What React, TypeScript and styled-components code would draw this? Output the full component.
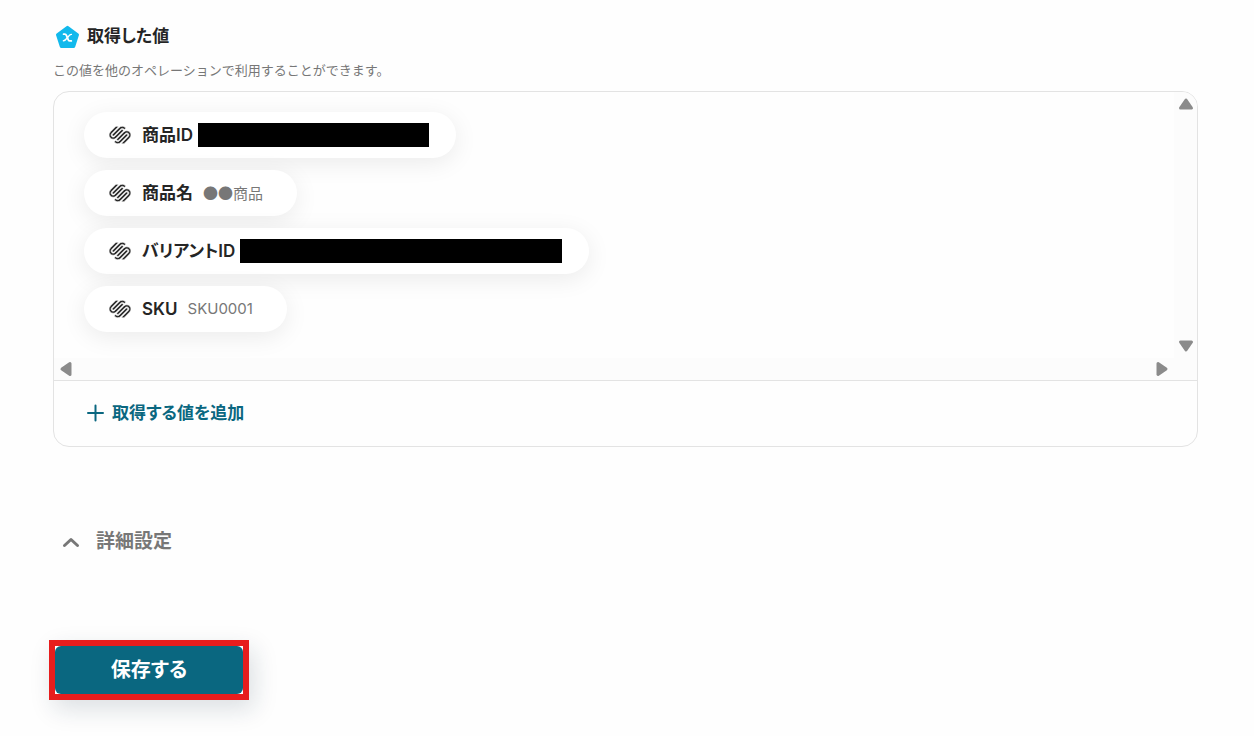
import React from "react";
import styled, { createGlobalStyle } from "styled-components";
import { SiSquarespace } from "react-icons/si";

const GlobalStyle = createGlobalStyle`
  * { box-sizing: border-box; }
  body {
    margin: 0;
    background: #fefefe;
    color: #252525;
    font-family: Inter, "Noto Sans CJK JP", sans-serif;
    font-feature-settings: "palt";
  }
  button { font: inherit; font-feature-settings: inherit; cursor: pointer; }
`;

const Page = styled.main`
  padding: 23px 56px 36px 53px;
`;

const Heading = styled.h2`
  display: flex;
  align-items: center;
  gap: 6px;
  margin: 0;
  padding-left: 2px;
  font-size: 17px;
  line-height: 24px;
  font-weight: 600;
`;

const Description = styled.p`
  margin: 11px 0;
  font-size: 13px;
  line-height: 20px;
  font-feature-settings: normal;
  color: #777;
`;

const Panel = styled.section`
  border: 1px solid #e3e3e3;
  border-radius: 16px;
  overflow: hidden;
`;

const ScrollArea = styled.div`
  display: grid;
  grid-template-columns: 1fr 23px;
  grid-template-rows: auto 22px;
  border-bottom: 1px solid #e3e3e3;
`;

const ValueList = styled.ul`
  display: flex;
  flex-direction: column;
  align-items: flex-start;
  gap: 12px;
  margin: 0;
  padding: 20px 30px 26px;
  list-style: none;
  overflow: hidden;
`;

const ScrollTrack = styled.div<{ $vertical?: boolean }>`
  display: flex;
  flex-direction: ${(p) => (p.$vertical ? "column" : "row")};
  justify-content: space-between;
  align-items: center;
  padding: ${(p) => (p.$vertical ? "4px 0" : "0 4px")};
  background: #fcfcfc;
`;

const ScrollCorner = styled.div`
  background: #fcfcfc;
`;

const ScrollButton = styled.button`
  display: flex;
  padding: 0;
  border: 0;
  background: none;
  color: #8b8b8b;
`;

const Pill = styled.li`
  display: flex;
  align-items: center;
  height: 46px;
  padding: 0 34px 0 25px;
  border-radius: 23px;
  background: #fff;
  box-shadow: 0 5px 25px rgba(0, 0, 0, 0.08);

  svg { flex: none; }
`;

const PillName = styled.span`
  margin-left: 11px;
  font-size: 17px;
  line-height: 24px;
  font-weight: 600;
`;

const PillValue = styled.span<{ $japanese?: boolean }>`
  margin-left: 10px;
  font-family: ${(p) => (p.$japanese ? '"Noto Sans CJK JP", sans-serif' : "inherit")};
  font-size: 15px;
  line-height: 24px;
  font-feature-settings: normal;
  color: #777;
`;

const Redaction = styled.span<{ $width: number }>`
  width: ${(p) => p.$width}px;
  height: 24px;
  margin: 0 -7px 0 5px;
  background: #000;
`;

const PanelFooter = styled.div`
  padding: 20px 32px 21px;
`;

const AddButton = styled.button`
  display: flex;
  align-items: center;
  gap: 7px;
  padding: 0;
  border: 0;
  background: none;
  color: #0a6780;

  span { font-size: 17px; line-height: 24px; font-weight: 600; }
`;

const AdvancedToggle = styled.button`
  display: flex;
  align-items: center;
  gap: 16px;
  margin: 80px 0 83px 9px;
  padding: 0;
  border: 0;
  background: none;
  color: #777;

  span { font-size: 19px; line-height: 30px; font-weight: 600; }
`;

const SaveButton = styled.button`
  display: block;
  width: 188px;
  height: 48px;
  padding: 0;
  border: 0;
  border-radius: 6px;
  background: #0a6780;
  color: #fff;

  span { font-size: 20px; line-height: 28px; font-weight: 700; }
`;

const Highlight = styled.div`
  display: inline-block;
  margin-left: -4px;
  border: 6px solid #e71d1d;
  background: #fff;
  box-shadow: 5px 9px 24px rgba(20, 50, 70, 0.15);
`;

function VariableIcon() {
  return (
    <svg width="26" height="26" viewBox="0 0 26 26" aria-hidden="true">
      <path
        d="M12.500 4.600 22.300 11.800 18.600 23.300H6.400L2.700 11.800Z"
        fill="#12b9ec"
        stroke="#12b9ec"
        strokeWidth="3.400"
        strokeLinejoin="round"
      />
      <path
        d="M8.600 11.200h1.300c.8 0 1.200.5 1.500 1.200l1.900 4.400c.3.700.7 1.100 1.400 1.100h1.600"
        fill="none"
        stroke="#fff"
        strokeWidth="1.800"
        strokeLinecap="round"
      />
      <path
        d="M16.400 11.400c-1.300-.2-2 .6-3.900 3.100s-2.600 3.500-4.100 3.300"
        fill="none"
        stroke="#fff"
        strokeWidth="1.400"
        strokeLinecap="round"
      />
    </svg>
  );
}

const arrowAngles = { up: 0, right: 90, down: 180, left: 270 };

function Arrow({ direction }: { direction: keyof typeof arrowAngles }) {
  return (
    <svg width="16" height="16" viewBox="0 0 16 16" aria-hidden="true">
      <path
        d="M8 4 13.500 12H2.500Z"
        transform={`rotate(${arrowAngles[direction]} 8 8)`}
        fill="currentColor"
        stroke="currentColor"
        strokeWidth="3"
        strokeLinejoin="round"
      />
    </svg>
  );
}

type Value = { name: string; value?: string; japanese?: boolean; redacted?: number };

const values: Value[] = [
  { name: "商品ID", redacted: 231 },
  { name: "商品名", value: "●●商品", japanese: true },
  { name: "バリアントID", redacted: 322 },
  { name: "SKU", value: "SKU0001" },
];

export default function App() {
  return (
    <Page>
      <GlobalStyle />
      <Heading>
        <VariableIcon />
        <span>取得した値</span>
      </Heading>
      <Description>この値を他のオペレーションで利用することができます。</Description>
      <Panel>
        <ScrollArea>
          <ValueList>
            {values.map((v) => (
              <Pill key={v.name}>
                <SiSquarespace size={22} stroke="#fff" strokeWidth="0.7" aria-hidden="true" />
                <PillName>{v.name}</PillName>
                {v.value && <PillValue $japanese={v.japanese}>{v.value}</PillValue>}
                {v.redacted && <Redaction $width={v.redacted} />}
              </Pill>
            ))}
          </ValueList>
          <ScrollTrack $vertical>
            <ScrollButton type="button" aria-label="上へスクロール">
              <Arrow direction="up" />
            </ScrollButton>
            <ScrollButton type="button" aria-label="下へスクロール">
              <Arrow direction="down" />
            </ScrollButton>
          </ScrollTrack>
          <ScrollTrack>
            <ScrollButton type="button" aria-label="左へスクロール">
              <Arrow direction="left" />
            </ScrollButton>
            <ScrollButton type="button" aria-label="右へスクロール">
              <Arrow direction="right" />
            </ScrollButton>
          </ScrollTrack>
          <ScrollCorner />
        </ScrollArea>
        <PanelFooter>
          <AddButton type="button">
            <svg width="19" height="18" viewBox="0 0 19 18" aria-hidden="true">
              <path d="M9.500 1.500v15M2 9h15" stroke="currentColor" strokeWidth="2" strokeLinecap="round" />
            </svg>
            <span>取得する値を追加</span>
          </AddButton>
        </PanelFooter>
      </Panel>
      <AdvancedToggle type="button" aria-expanded="false">
        <svg width="18" height="18" viewBox="0 0 18 18" aria-hidden="true">
          <path d="M2.500 12.500 9 6.500l6.500 6" fill="none" stroke="currentColor" strokeWidth="3" strokeLinecap="round" strokeLinejoin="round" />
        </svg>
        <span>詳細設定</span>
      </AdvancedToggle>
      <Highlight>
        <SaveButton type="button">
          <span>保存する</span>
        </SaveButton>
      </Highlight>
    </Page>
  );
}
